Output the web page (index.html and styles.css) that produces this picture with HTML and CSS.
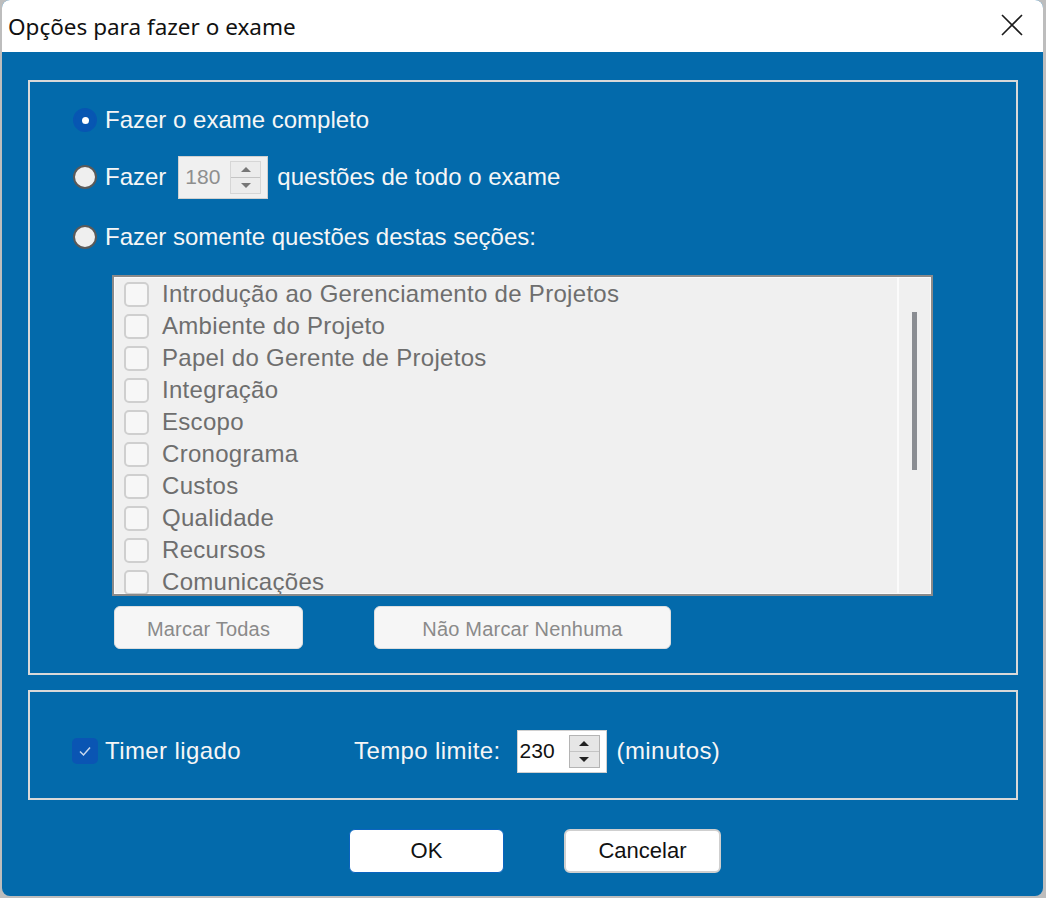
FILE: index.html
```html
<!DOCTYPE html>
<html lang="pt">
<head>
	<meta charset="UTF-8">
	<title>Opções para fazer o exame</title>
	<link rel="stylesheet" href="styles.css">
</head>
<body>
	<div class="window">
		<div class="titlebar">
			<span class="title">Opções para fazer o exame</span>
			<svg class="close" width="22" height="22" viewBox="0 0 22 22">
				<path d="M1 1 L21 21 M21 1 L1 21" stroke="#1b1b1b" stroke-width="1.6" fill="none"/>
			</svg>
		</div>
		<div class="content">
			<div class="panel sections">
				<div class="option first">
					<span class="radio on"></span>
					<span>Fazer o exame completo</span>
				</div>
				<div class="option second">
					<span class="radio"></span>
					<span>Fazer</span>
					<span class="spin off">
						<span class="value">180</span>
						<span class="arrows">
							<span class="up"></span>
							<span class="down"></span>
						</span>
					</span>
					<span class="after">questões de todo o exame</span>
				</div>
				<div class="option third">
					<span class="radio"></span>
					<span>Fazer somente questões destas seções:</span>
				</div>
				<div class="listbox">
					<ul class="items">
						<li><span class="check"></span>Introdução ao Gerenciamento de Projetos</li>
						<li><span class="check"></span>Ambiente do Projeto</li>
						<li><span class="check"></span>Papel do Gerente de Projetos</li>
						<li><span class="check"></span>Integração</li>
						<li><span class="check"></span>Escopo</li>
						<li><span class="check"></span>Cronograma</li>
						<li><span class="check"></span>Custos</li>
						<li><span class="check"></span>Qualidade</li>
						<li><span class="check"></span>Recursos</li>
						<li><span class="check"></span>Comunicações</li>
					</ul>
					<div class="scroll"><div class="thumb"></div></div>
				</div>
				<div class="list-actions">
					<button class="btn-off all">Marcar Todas</button>
					<button class="btn-off none">Não Marcar Nenhuma</button>
				</div>
			</div>
			<div class="panel timer">
				<div class="timer-row">
					<span class="timer-on">
						<span class="check on">
							<svg width="16" height="16" viewBox="0 0 16 16"><path d="M3 8.5 L6.5 12 L13 4.5" stroke="#c9d8ee" stroke-width="1.5" fill="none"/></svg>
						</span>
						<span>Timer ligado</span>
					</span>
					<span>Tempo limite:</span>
					<span class="spin">
						<span class="value">230</span>
						<span class="arrows">
							<span class="up"></span>
							<span class="down"></span>
						</span>
					</span>
					<span>(minutos)</span>
				</div>
			</div>
			<div class="actions">
				<button class="ok">OK</button>
				<button class="cancel">Cancelar</button>
			</div>
		</div>
	</div>
</body>
</html>
```
FILE: styles.css
```css
* {
	margin: 0;
	padding: 0;
	box-sizing: border-box;
}
body {
	background: #bdbdbd;
	font-family: "Liberation Sans", Arial, sans-serif;
	font-size: 24px;
	overflow: hidden;
}
.window {
	width: 1041px;
	height: 896px;
	margin-left: 2px;
	border-radius: 8px;
	overflow: hidden;
	background: #036aab;
	display: flex;
	flex-direction: column;
}
.titlebar {
	height: 52px;
	background: #ffffff;
	display: flex;
	align-items: center;
	padding-left: 6px;
	padding-right: 20px;
}
.title {
	font-family: "Noto Sans", sans-serif;
	font-size: 22.5px;
	color: #111;
	flex: 1;
}
.close {
	margin-top: -3px;
}
.content {
	flex: 1;
	padding: 28px 25px 0 26px;
	color: #f6f6f6;
}
.panel {
	border: 2px solid #d9d9d9;
}
.sections {
	height: 595px;
	padding: 16px 0 0 43px;
}
.option {
	height: 44px;
	display: flex;
	align-items: center;
}
.option.second {
	margin-top: 13px;
}
.option.third {
	margin-top: 16px;
}
.radio {
	width: 24px;
	height: 24px;
	border-radius: 50%;
	background: #efefef;
	border: 2px solid #5a5a5a;
	margin-right: 8px;
	display: inline-flex;
	align-items: center;
	justify-content: center;
}
.radio.on {
	background: #0756b2;
	border-color: #0756b2;
}
.radio.on::after {
	content: "";
	width: 7px;
	height: 7px;
	border-radius: 50%;
	background: #fff;
}
.spin {
	width: 90px;
	height: 43px;
	background: #fff;
	border: 1px solid #d0d0d0;
	display: inline-flex;
	align-items: center;
	padding: 0 6px 0 2px;
	font-size: 21px;
	color: #111;
}
.second .spin {
	margin-left: 12px;
}
.spin.off {
	background: #f0f0f0;
	color: #8e8e8e;
	padding-left: 6px;
}
.spin .value {
	flex: 1;
}
.arrows {
	width: 31px;
	height: 33px;
	display: flex;
	flex-direction: column;
	border: 1px solid #b4b4b4;
	background: #e6e6e6;
}
.spin.off .arrows {
	border-color: #d6d6d6;
	background: #ececec;
}
.arrows span {
	flex: 1;
	display: flex;
	align-items: center;
	justify-content: center;
}
.arrows .down {
	border-top: 1px solid #c4c4c4;
}
.arrows .up::after {
	content: "";
	border: 5px solid transparent;
	border-bottom: 5px solid #222;
	border-top: 0;
}
.arrows .down::after {
	content: "";
	border: 5px solid transparent;
	border-top: 5px solid #222;
	border-bottom: 0;
}
.spin.off .arrows .up::after {
	border-bottom-color: #777;
}
.spin.off .arrows .down::after {
	border-top-color: #777;
}
.after {
	margin-left: 9px;
}
.listbox {
	margin: 16px 0 0 39px;
	width: 821px;
	height: 321px;
	border: 2px solid #8a8a8a;
	background: #f0f0f0;
	box-shadow: inset 0 0 0 1px #fafafa;
	display: flex;
	overflow: hidden;
}
.items {
	flex: 1;
	list-style: none;
	padding: 1px 0 0 10px;
	color: #6e6e6e;
	letter-spacing: 0.3px;
}
.items li {
	height: 32px;
	display: flex;
	align-items: center;
}
.check {
	width: 25px;
	height: 25px;
	border: 2px solid #cfcfcf;
	border-radius: 5px;
	background: #f7f7f7;
	margin-right: 13px;
	display: inline-flex;
	align-items: center;
	justify-content: center;
}
.scroll {
	width: 34px;
	border-left: 2px solid #fbfbfb;
	padding: 35px 0 0 13px;
}
.thumb {
	width: 5px;
	height: 158px;
	background: #8a8d92;
}
.list-actions {
	margin: 10px 0 0 41px;
	display: flex;
	gap: 71px;
}
.btn-off {
	height: 43px;
	padding: 3px 0 0;
	border: 1px solid #dedede;
	border-radius: 6px;
	background: #f6f6f6;
	color: #8a8a8a;
	font-family: "Liberation Sans", Arial, sans-serif;
	font-size: 20px;
	letter-spacing: 0.2px;
}
.btn-off.all {
	width: 189px;
}
.btn-off.none {
	width: 297px;
}
.timer {
	height: 110px;
	margin-top: 15px;
	padding: 37px 0 0 42px;
	letter-spacing: 0.4px;
}
.timer-row {
	height: 44px;
	display: flex;
	align-items: center;
}
.timer-on {
	width: 282px;
	display: flex;
	align-items: center;
}
.check.on {
	width: 26px;
	height: 26px;
	border: none;
	background: #0a55b3;
	margin-right: 7px;
}
.timer-row .spin {
	margin: 0 10px 0 16px;
	letter-spacing: 0;
}
.actions {
	margin-top: 29px;
	padding-left: 321px;
	display: flex;
	align-items: center;
	gap: 60px;
}
.actions button {
	height: 44px;
	padding: 0;
	background: #fff;
	border-radius: 6px;
	font-family: "Liberation Sans", Arial, sans-serif;
	font-size: 22px;
	color: #111;
}
.ok {
	width: 155px;
	border: 1px solid #0a64c0;
}
.cancel {
	width: 157px;
	height: 45px;
	border: 2px solid #cfcfcf;
}
```
